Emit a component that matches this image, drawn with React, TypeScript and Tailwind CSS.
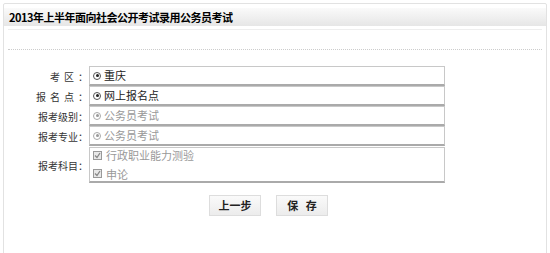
import React from 'react';

const Radio = ({ disabled }: { disabled?: boolean }) => (
  <span
    className={`inline-flex w-[8px] h-[8px] rounded-full border items-center justify-center mr-[3px] ${
      disabled ? 'border-[#aaa]' : 'border-[#555]'
    }`}
  >
    <span className={`w-[3px] h-[3px] rounded-full ${disabled ? 'bg-[#999]' : 'bg-[#222]'}`} />
  </span>
);

const Check = () => (
  <span className="inline-flex w-[9px] h-[9px] border border-[#999] bg-[#e8e8e8] items-center justify-center mr-[4px]">
    <svg width="7" height="7" viewBox="0 0 7 7">
      <path d="M1 3.5 L3 5.5 L6 1" stroke="#888" strokeWidth="1.3" fill="none" />
    </svg>
  </span>
);

const Row = ({ label, gap, children, tall }: { label: string; gap: string; children: React.ReactNode; tall?: boolean }) => (
  <div className="flex items-center">
    <div className={`w-[85px] pr-[1px] flex justify-end text-[10px] text-[#333] ${gap}`}>
      {label.split('').map((c, i) => (
        <span key={i}>{c}</span>
      ))}
      <span>：</span>
    </div>
    <div
      className={`w-[356px] border border-[#c8c8c8] border-b-[#aaa] border-b-2 bg-white px-[3px] text-[11px] flex ${
        tall ? 'h-[36px] flex-col justify-center gap-[2px]' : 'h-[20px] items-center'
      }`}
    >
      {children}
    </div>
  </div>
);

const App = () => {
  return (
    <div className="w-[550px] h-[253px] overflow-hidden bg-white pt-[3px] px-[3px] font-['Noto_Sans_CJK_SC',sans-serif]">
      <div className="h-[260px] border border-[#e2e2e2] rounded-[2px]">
        <div className="mt-[4px] h-[18px] bg-gradient-to-b from-[#fafafa] to-[#e6e6e6] flex items-center px-[5px] text-[11px] tracking-[-0.5px] font-bold text-black">
          2013年上半年面向社会公开考试录用公务员考试
        </div>
        <div className="mx-[4px] mt-[3px] border-t border-[#eee]" />
        <div className="mx-[4px] mt-[19px] border-t border-dotted border-[#ccc]" />
        <div className="mt-[16px] flex flex-col">
          <Row label="考区" gap="gap-[4px]">
            <Radio />
            <span className="text-[#222]">重庆</span>
          </Row>
          <Row label="报名点" gap="gap-[4px]">
            <Radio />
            <span className="text-[#222]">网上报名点</span>
          </Row>
          <Row label="报考级别" gap="gap-0">
            <Radio disabled />
            <span className="text-[#999]">公务员考试</span>
          </Row>
          <Row label="报考专业" gap="gap-0">
            <Radio disabled />
            <span className="text-[#999]">公务员考试</span>
          </Row>
          <div className="h-[1px]" />
          <Row label="报考科目" gap="gap-0" tall>
            <div className="flex items-center">
              <Check />
              <span className="text-[#999]">行政职业能力测验</span>
            </div>
            <div className="flex items-center">
              <Check />
              <span className="text-[#999]">申论</span>
            </div>
          </Row>
        </div>
        <div className="mt-[12px] flex justify-center gap-[15px] pr-[13px]">
          <button className="w-[52px] h-[21px] border border-[#ddd] bg-gradient-to-b from-[#fafafa] to-[#ececec] text-[11px] font-bold text-[#222]">
            上一步
          </button>
          <button className="w-[52px] h-[21px] border border-[#ddd] bg-gradient-to-b from-[#fafafa] to-[#ececec] text-[11px] font-bold text-[#222] whitespace-pre">
            保   存
          </button>
        </div>
      </div>
    </div>
  );
};

export default App;
